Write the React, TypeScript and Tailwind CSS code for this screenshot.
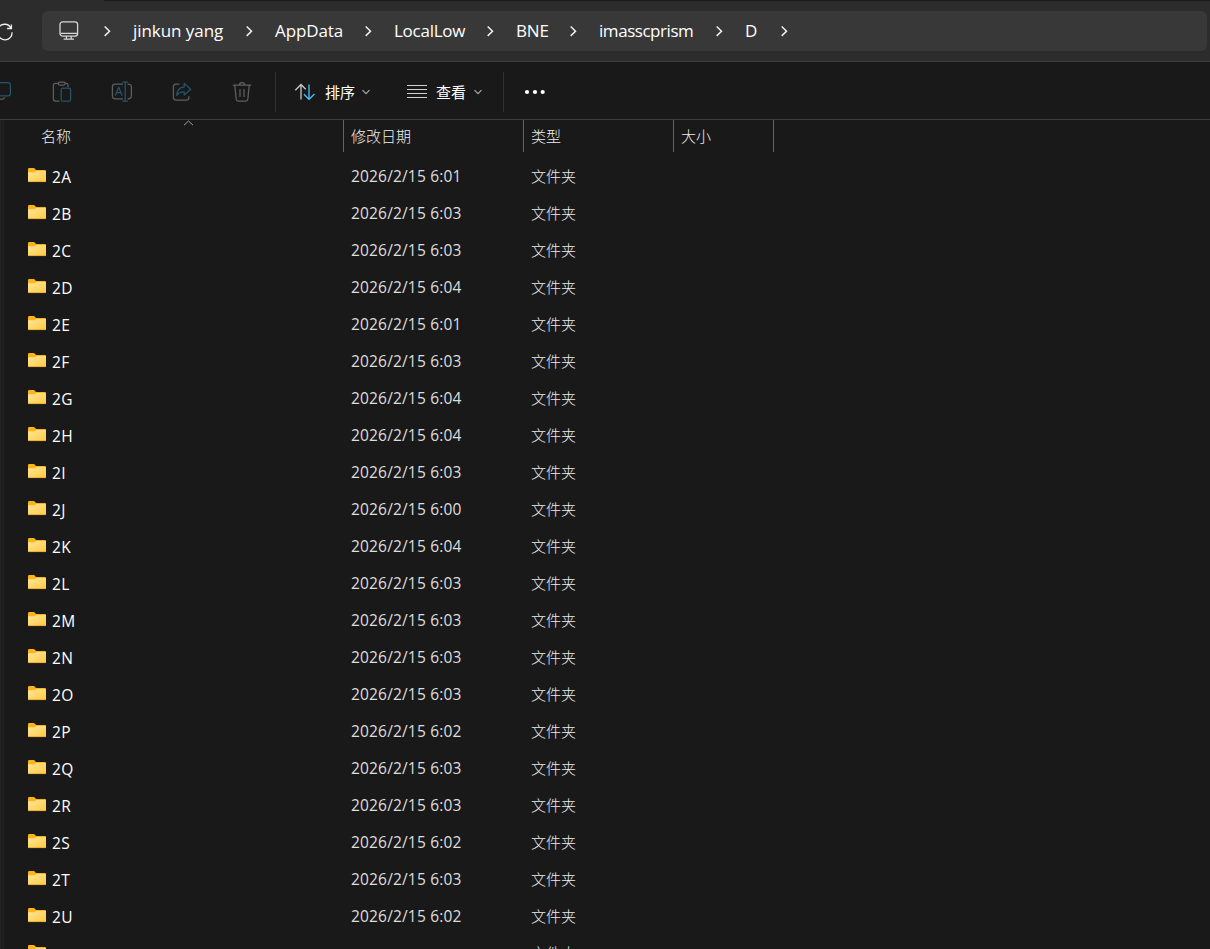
import React from "react";

const LATIN = "font-['Open_Sans','Noto_Sans_CJK_SC',sans-serif]";
const CJK = "font-['Noto_Sans_CJK_SC',sans-serif]";

const crumbs: { name: string; box: string; text?: string }[] = [
  { name: "jinkun yang", box: "w-[142px]", text: "tracking-[-0.05px]" },
  { name: "AppData", box: "w-[119px]", text: "tracking-[-0.1px]" },
  { name: "LocalLow", box: "w-[122px]", text: "tracking-[-0.25px]" },
  { name: "BNE", box: "w-[83px]", text: "tracking-[-0.2px]" },
  { name: "imasscprism", box: "w-[146px]", text: "tracking-[-0.45px]" },
  { name: "D", box: "w-[65px]" },
];

const rows: [string, string][] = [
  ["2A", "6:01"], ["2B", "6:03"], ["2C", "6:03"], ["2D", "6:04"], ["2E", "6:01"],
  ["2F", "6:03"], ["2G", "6:04"], ["2H", "6:04"], ["2I", "6:03"], ["2J", "6:00"],
  ["2K", "6:04"], ["2L", "6:03"], ["2M", "6:03"], ["2N", "6:03"], ["2O", "6:03"],
  ["2P", "6:02"], ["2Q", "6:03"], ["2R", "6:03"], ["2S", "6:02"], ["2T", "6:03"],
  ["2U", "6:02"], ["", ""],
];

function Chevron() {
  return (
    <svg className="size-[12px] shrink-0" viewBox="0 0 12 12" fill="none" stroke="#f0f0f0" strokeWidth="1.5">
      <path d="M3.7 1.5 8.5 6.2 3.7 10.9" />
    </svg>
  );
}

function DownChevron() {
  return (
    <svg className="h-[8px] w-[10px] shrink-0" viewBox="0 0 10 8" fill="none" stroke="#a8a8a8" strokeWidth="1.2">
      <path d="M1.5 2.2 5 5.7 8.5 2.2" />
    </svg>
  );
}

function Folder() {
  return (
    <svg className="h-[16px] w-[18px] shrink-0" viewBox="0 0 18 16">
      <defs>
        <linearGradient id="folder-face" x1="0" y1="0" x2="1" y2="1">
          <stop offset="0" stopColor="#ffe69a" />
          <stop offset="1" stopColor="#ffca42" />
        </linearGradient>
      </defs>
      <path d="M0 2.2Q0 1 1.2 1H5.6Q6.2 1 6.7 1.5L8 3H17Q18 3 18 4V8H0Z" fill="#fbb518" />
      <path d="M0 5.2H6.6L8.2 4H18V14.3Q18 15 17.2 15H.8Q0 15 0 14.3Z" fill="url(#folder-face)" />
      <path d="M.2 14.6H17.8" stroke="#e9a51f" strokeWidth=".8" />
    </svg>
  );
}

function Tool({ children }: { children: React.ReactNode }) {
  return (
    <svg className="size-[24px] shrink-0" viewBox="0 0 24 24" fill="none" stroke="#5f5f5f" strokeWidth="1.25" strokeLinecap="round" strokeLinejoin="round">
      {children}
    </svg>
  );
}

export default function App() {
  return (
    <div className={`flex h-[949px] w-[1210px] flex-col overflow-hidden bg-[#191919] text-white ${LATIN}`}>
      <div className="flex h-px shrink-0 bg-[#2c2c2c] pl-[104px]">
        <div className="flex-1 bg-[#1c1c1c]" />
      </div>
      <header className="flex h-[61px] shrink-0 items-center border-b border-[#3d3d3d] bg-[#2c2c2c]">
        <div className="flex w-[42px]">
          <svg className="-ml-[5px] size-[20px]" viewBox="0 0 20 20" fill="none" stroke="#f0f0f0" strokeWidth="1.3">
            <path d="M3 8.2A7 7 0 0 1 16 7.2M16.4 3.4V7.5H12.1M17 11.2A7 7 0 0 1 3 12.5" />
          </svg>
        </div>
        <div className="flex h-[40px] w-[1165px] items-center rounded-[6px] bg-[#383838] pl-[17px]">
          <svg className="size-[20px] shrink-0" viewBox="0 0 20 20" fill="none" stroke="#d6d6d6" strokeWidth="1.3">
            <rect x="1" y=".8" width="17.6" height="14.4" rx="2.8" />
            <path d="M1.6 12.4H18M7.4 15.2V18M12.2 15.2V18M4.6 18.2H15" />
          </svg>
          <div className="flex w-[54px] justify-center pl-[2px]"><Chevron /></div>
          {crumbs.map((c) => (
            <div key={c.name} className={`flex shrink-0 items-center justify-between pr-[20px] ${c.box}`}>
              <span className={`whitespace-nowrap text-[17px] leading-[24px] ${c.text ?? ""}`}>{c.name}</span>
              <Chevron />
            </div>
          ))}
        </div>
      </header>

      <div className="flex h-[58px] shrink-0 items-center border-b border-[#3d3d3d] pt-[3px]">
        <div className="flex w-[275px] items-center gap-[36px]">
          <div className="-ml-[10px] flex">
            <Tool>
              <rect x="8.6" y="2.6" width="11.8" height="13.2" rx="2.6" stroke="#25556b" />
              <path d="M5 6V15Q5 19.2 9 19.2H12Q14 19.2 14.6 17.8" />
            </Tool>
          </div>
          <Tool>
            <path d="M8.2 3.4H5.6Q3.4 3.4 3.4 5.4V19Q3.4 21 5.6 21H9M15.4 3.4H16.4Q18 3.4 18 5V6.5" />
            <rect x="8.2" y="2" width="7" height="3" rx="1.5" />
            <rect x="11.2" y="8.2" width="9.4" height="13" rx="1.8" stroke="#25556b" />
          </Tool>
          <Tool>
            <path d="M12.5 4H5.2Q2.4 4 2.4 6.8V16Q2.4 18.8 5.2 18.8H12.5M18 4Q21.4 4 21.4 7V15.8Q21.4 18.8 18 18.8" />
            <path d="M5.4 15.2 8.7 7.2 12 15.2M6.5 12.7H10.9M15.2 2V21M12.9 2H17.5M12.9 21H17.5" stroke="#25556b" />
          </Tool>
          <Tool>
            <path d="M9 4H6Q3.4 4 3.4 6.8V17.2Q3.4 20 6 20H16.4Q19 20 19 17.2V16.5" />
            <path d="M14.2 3.4 20.8 9.2 14.2 15V11.8Q9.4 11.4 6.8 15.4Q7.2 7.2 14.2 6.8Z" stroke="#25556b" />
          </Tool>
          <Tool>
            <path d="M3.2 5.2H20.8M9.4 5Q9.4 2.6 12 2.6T14.6 5M4.8 5.4 6.2 19.2Q6.4 21 8.2 21H15.8Q17.6 21 17.8 19.2L19.2 5.4M10 9.6V16.5M14 9.6V16.5" />
          </Tool>
        </div>
        <div className="h-[40px] w-px bg-[#303030]" />
        <div className={`ml-[18px] flex items-center text-[15px] ${CJK}`}>
          <svg className="mr-[9px] size-[22px]" viewBox="0 0 22 22" fill="none" strokeWidth="1.3">
            <path d="M7 18.5V3.8M1.3 9.3 7 3.5 11.7 8.3" stroke="#c8c8c8" />
            <path d="M15 3.5V18.2M10 13.2 15 18.4 20.5 13" stroke="#4cc2ff" />
          </svg>
          <span className="mr-[5px] w-[31px] whitespace-nowrap">排序</span>
          <DownChevron />
        </div>
        <div className={`ml-[36px] flex items-center text-[15px] ${CJK}`}>
          <svg className="mr-[9px] h-[16px] w-[20px]" viewBox="0 0 20 16" stroke="#cfcfcf" strokeWidth="1.2">
            <path d="M0 1.5H20M0 5.5H20M0 9.5H20M0 13.5H20" />
          </svg>
          <span className="mr-[6px] w-[31px] whitespace-nowrap">查看</span>
          <DownChevron />
        </div>
        <div className="ml-[20px] h-[40px] w-px bg-[#303030]" />
        <svg className="ml-[20px] h-[6px] w-[22px]" viewBox="0 0 22 6" fill="#fff">
          <circle cx="3" cy="3" r="2.1" /><circle cx="11" cy="3" r="2.1" /><circle cx="18.7" cy="3" r="2.1" />
        </svg>
      </div>

      <div className="flex min-h-0 flex-1">
        <div className="w-[4px] shrink-0 border-x border-[#232323] bg-[#1d1d1d]" />
        <main className="flex min-w-0 flex-1 flex-col">
          <div className={`grid h-[38px] shrink-0 grid-cols-[340px_180px_150px_100px] text-[15px] leading-[32px] font-light text-[#eeeeee] ${CJK}`}>
            <div className="flex h-[32px] items-start border-r border-[#636363] pl-[37px]">
              <span className="w-[142px]">名称</span>
              <svg className="h-[6px] w-[11px]" viewBox="0 0 11 6" fill="none" stroke="#a0a0a0">
                <path d="M1 5.2 5.5 1 10 5.2" />
              </svg>
            </div>
            <div className="h-[32px] border-r border-[#636363] pl-[7px]">修改日期</div>
            <div className="h-[32px] border-r border-[#636363] pl-[7px]">类型</div>
            <div className="h-[32px] border-r border-[#636363] pl-[7px]">大小</div>
          </div>
          {rows.map(([name, time], i) => (
            <div key={i} className="grid h-[37px] shrink-0 grid-cols-[340px_180px_150px] text-[15.5px] text-[#dedede]">
              <div className="flex pl-[24px] leading-[38px] tracking-[0.3px] text-white">
                <div className="mr-[6px] pt-[9px]"><Folder /></div>
                <span>{name}</span>
              </div>
              <div className="pl-[7px] leading-[37px] tracking-[0.17px]">{time && `2026/2/15 ${time}`}</div>
              <div className={`pl-[7px] text-[15px] leading-[35px] font-light text-[#eeeeee] ${CJK}`}>文件夹</div>
            </div>
          ))}
        </main>
      </div>
    </div>
  );
}
